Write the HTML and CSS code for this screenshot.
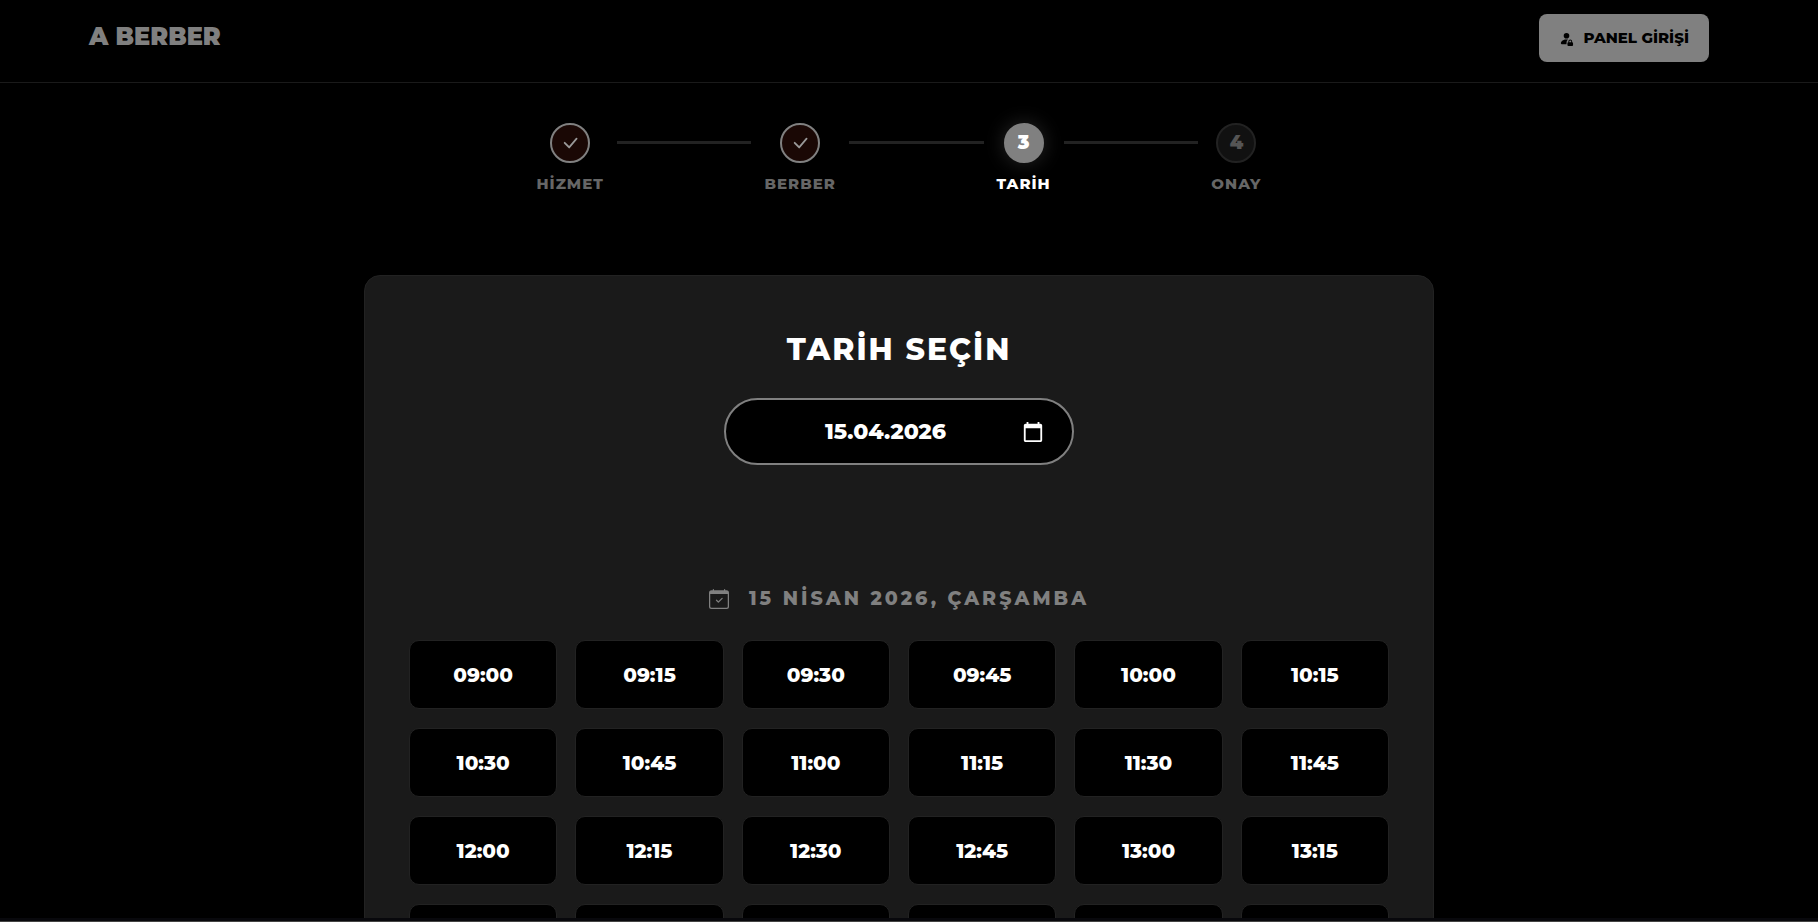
FILE: index.html
```
<!DOCTYPE html>
<html lang="tr">
<head>
    <meta charset="UTF-8">
    <meta name="viewport" content="width=device-width, initial-scale=1.0">
    <title>A BERBER</title>
    <link rel="stylesheet" href="styles.css">
</head>
<body>
    <header class="navbar">
        <a href="#" class="logo">A BERBER</a>
        <a href="#" class="panel-btn">
            <svg width="15" height="15" viewBox="0 0 16 16" fill="currentColor" aria-hidden="true"><path d="M11 5a3 3 0 1 1-6 0 3 3 0 0 1 6 0m-9 8c0 1 1 1 1 1h5v-1a2 2 0 0 1 .01-.2 4.49 4.49 0 0 1 1.534-3.693Q8.844 9.002 8 9c-5 0-6 3-6 4m7 0a1 1 0 0 1 1-1v-1a2 2 0 1 1 4 0v1a1 1 0 0 1 1 1v2a1 1 0 0 1-1 1h-4a1 1 0 0 1-1-1zm3-3a1 1 0 0 0-1 1v1h2v-1a1 1 0 0 0-1-1"/></svg>
            PANEL GİRİŞİ
        </a>
    </header>

    <main>
        <div class="stepper">
            <div class="step done">
                <div class="circle"><svg width="20" height="20" viewBox="0 0 16 16" fill="currentColor" aria-hidden="true"><path d="M12.736 3.97a.733.733 0 0 1 1.047 0c.286.289.29.756.01 1.05L7.88 12.01a.733.733 0 0 1-1.065.02L3.217 8.384a.757.757 0 0 1 0-1.06.733.733 0 0 1 1.047 0l3.052 3.093 5.4-6.425z"/></svg></div>
                <span>HİZMET</span>
            </div>
            <div class="line"></div>
            <div class="step done">
                <div class="circle"><svg width="20" height="20" viewBox="0 0 16 16" fill="currentColor" aria-hidden="true"><path d="M12.736 3.97a.733.733 0 0 1 1.047 0c.286.289.29.756.01 1.05L7.88 12.01a.733.733 0 0 1-1.065.02L3.217 8.384a.757.757 0 0 1 0-1.06.733.733 0 0 1 1.047 0l3.052 3.093 5.4-6.425z"/></svg></div>
                <span>BERBER</span>
            </div>
            <div class="line"></div>
            <div class="step active">
                <div class="circle">3</div>
                <span>TARİH</span>
            </div>
            <div class="line"></div>
            <div class="step">
                <div class="circle">4</div>
                <span>ONAY</span>
            </div>
        </div>

        <section class="card">
            <h1><label for="date">TARİH SEÇİN</label></h1>
            <div class="date-box">
                <input type="text" id="date" value="15.04.2026">
                <button type="button" class="date-btn" aria-label="Takvim">
                    <svg width="22" height="22" viewBox="0 0 24 24" fill="currentColor" aria-hidden="true"><path d="M20 3h-1V1h-2v2H7V1H5v2H4c-1.1 0-2 .9-2 2v16c0 1.1.9 2 2 2h16c1.1 0 2-.9 2-2V5c0-1.1-.9-2-2-2zm0 18H4V8h16v13z"/></svg>
                </button>
            </div>

            <h2>
                <svg width="20" height="20" viewBox="0 0 16 16" fill="currentColor" aria-hidden="true"><path d="M10.854 7.146a.5.5 0 0 1 0 .708l-3 3a.5.5 0 0 1-.708 0l-1.5-1.5a.5.5 0 1 1 .708-.708L7.5 9.793l2.646-2.647a.5.5 0 0 1 .708 0"/><path d="M3.5 0a.5.5 0 0 1 .5.5V1h8V.5a.5.5 0 0 1 1 0V1h1a2 2 0 0 1 2 2v11a2 2 0 0 1-2 2H2a2 2 0 0 1-2-2V3a2 2 0 0 1 2-2h1V.5a.5.5 0 0 1 .5-.5M1 4v10a1 1 0 0 0 1 1h12a1 1 0 0 0 1-1V4z"/></svg>
                15 NİSAN 2026, ÇARŞAMBA
            </h2>
            <div class="slots">
                <button type="button">09:00</button>
                <button type="button">09:15</button>
                <button type="button">09:30</button>
                <button type="button">09:45</button>
                <button type="button">10:00</button>
                <button type="button">10:15</button>
                <button type="button">10:30</button>
                <button type="button">10:45</button>
                <button type="button">11:00</button>
                <button type="button">11:15</button>
                <button type="button">11:30</button>
                <button type="button">11:45</button>
                <button type="button">12:00</button>
                <button type="button">12:15</button>
                <button type="button">12:30</button>
                <button type="button">12:45</button>
                <button type="button">13:00</button>
                <button type="button">13:15</button>
                <button type="button">13:30</button>
                <button type="button">13:45</button>
                <button type="button">14:00</button>
                <button type="button">14:15</button>
                <button type="button">14:30</button>
                <button type="button">14:45</button>
            </div>
        </section>
    </main>
    <div class="bottom-edge"></div>
</body>
</html>
```

FILE: styles.css
```
* {
    box-sizing: border-box;
}

html {
    background-color: #000;
}

body {
    margin: 0;
    height: 100vh;
    overflow: hidden;
    background-color: #000;
    color: #fff;
    font-family: Montserrat, Inter, sans-serif;
}

/* Header */
.navbar {
    display: flex;
    justify-content: space-between;
    align-items: flex-start;
    height: 83px;
    padding: 14px 109px 0 89px;
    border-bottom: 1px solid #1a1a1a;
}

.logo {
    color: #808080;
    font-size: 24px;
    font-weight: 900;
    line-height: 46px;
    text-decoration: none;
}

.panel-btn {
    display: flex;
    align-items: center;
    gap: 10px;
    padding: 15px 20px;
    border-radius: 8px;
    background-color: #808080;
    color: #000;
    font-size: 15px;
    font-weight: 800;
    line-height: 18px;
    text-decoration: none;
}

main {
    padding: 40px 20px 0 0;
}

/* Steps */
.stepper {
    display: flex;
    gap: 13px;
    max-width: 725px;
    margin: 0 auto;
}

.step {
    display: flex;
    flex-direction: column;
    align-items: center;
    gap: 11px;
    color: #666;
    font-size: 15px;
    font-weight: 800;
    line-height: 20px;
    letter-spacing: 1px;
}

.circle {
    display: flex;
    align-items: center;
    justify-content: center;
    width: 40px;
    height: 40px;
    border: 2px solid #222;
    border-radius: 50%;
    background-color: #111;
    color: #555;
    font-size: 19px;
    font-weight: 900;
    letter-spacing: 0;
}

.done .circle {
    border-color: #808080;
    background-color: #1a0805;
    color: #999;
}

.active {
    color: #fff;
}

.active .circle {
    border-color: #808080;
    background-color: #808080;
    color: #fff;
    box-shadow: 0 0 20px rgba(128, 128, 128, 0.3);
}

.line {
    flex: 1;
    height: 3px;
    margin-top: 18px;
    background-color: #222;
}

/* Card */
.card {
    max-width: 1070px;
    margin: 81px auto 0;
    padding: 53px 44px 44px;
    border: 1px solid #222;
    border-radius: 16px;
    background-color: #1a1a1a;
}

h1 {
    margin: 0;
    font-size: 30px;
    font-weight: 800;
    line-height: 42px;
    letter-spacing: 2px;
    text-align: center;
}

.date-box {
    display: flex;
    align-items: center;
    gap: 5px;
    max-width: 350px;
    height: 67px;
    margin: 27px auto 0;
    padding: 0 28px;
    border: 2px solid #808080;
    border-radius: 34px;
    background-color: #000;
}

.date-box input {
    flex: 1;
    min-width: 0;
    padding: 0;
    border: none;
    outline: none;
    background: none;
    color: #fff;
    font-family: inherit;
    font-size: 22px;
    font-weight: 800;
    text-align: center;
}

.date-btn {
    display: flex;
    padding: 0;
    border: none;
    background: none;
    color: #fff;
    cursor: pointer;
}

h2 {
    display: flex;
    align-items: center;
    justify-content: center;
    gap: 20px;
    margin: 120px 0 0;
    color: #808080;
    font-size: 19px;
    font-weight: 800;
    line-height: 28px;
    letter-spacing: 3px;
}

/* Time slots */
.slots {
    display: grid;
    grid-template-columns: repeat(6, 1fr);
    gap: 19px 18px;
    margin-top: 27px;
}

.slots button {
    height: 69px;
    padding: 0;
    border: 1px solid #222;
    border-radius: 10px;
    background-color: #000;
    color: #fff;
    font-family: inherit;
    font-size: 20px;
    font-weight: 800;
    cursor: pointer;
}

.slots button:hover {
    border-color: #808080;
}

.bottom-edge {
    position: fixed;
    right: 0;
    bottom: 0;
    left: 0;
    height: 4px;
    border-bottom: 1px solid #444;
    background-color: #08080c;
}
```
